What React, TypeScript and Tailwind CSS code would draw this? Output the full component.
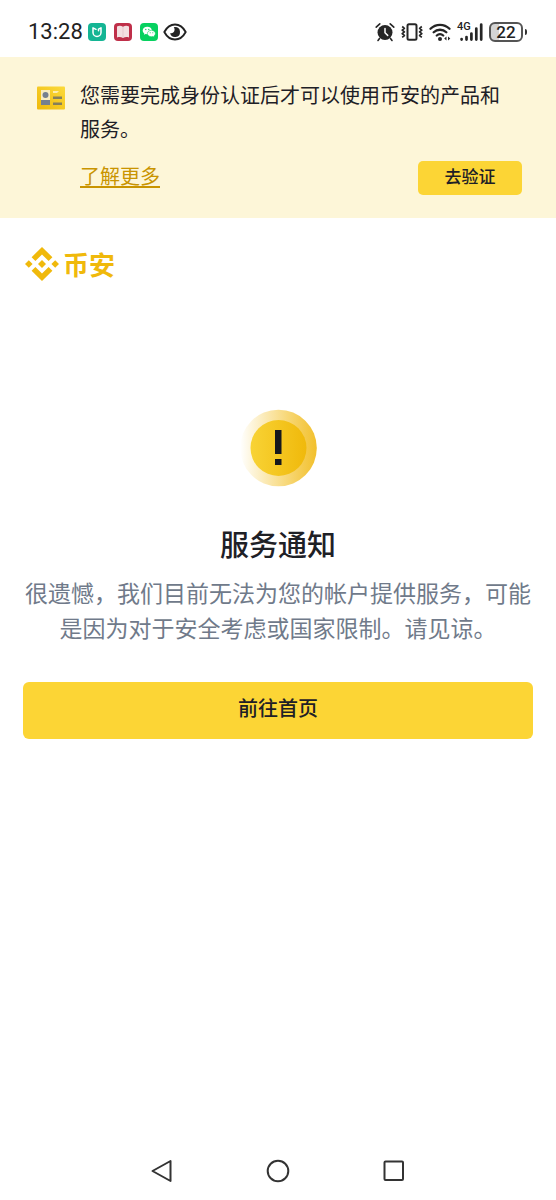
const MiHomeIcon = () => (
    <svg className="size-[18px]" viewBox="0 0 18 18" fill="none" aria-hidden="true">
        <rect width="18" height="18" rx="4" fill="#14b594" />
        <path d="M8 6.300L5 4.800v4.700a4 4 0 0 0 8 0V4.800L10.500 6.200v1.500" stroke="#fff" strokeWidth="1.500" strokeLinecap="round" strokeLinejoin="round" />
    </svg>
);

const ReaderIcon = () => (
    <svg className="size-[18px]" viewBox="0 0 18 18" aria-hidden="true">
        <rect width="18" height="18" rx="4" fill="#bf2f49" />
        <path d="M3 3.500c2-1 4-1 6 .3 2-1.300 4-1.300 6-.3v11c-2-.7-4-.7-6 .5-2-1.200-4-1.200-6-.5z" fill="#f3dfe1" />
        <path d="M9 4v10.500" stroke="#e3bfc5" strokeWidth=".7" />
    </svg>
);

const WeChatIcon = () => (
    <svg className="size-[18px]" viewBox="0 0 18 18" aria-hidden="true">
        <rect width="18" height="18" rx="4" fill="#07d160" />
        <path d="M7.300 3.800C4.700 3.800 2.700 5.400 2.700 7.500c0 1.200.6 2.200 1.600 2.900l-.4 1.400 1.700-.8 1.700.2c2.600 0 4.600-1.600 4.600-3.700S9.900 3.800 7.300 3.800z" fill="#fff" />
        <path d="M11.400 7.300c-2.200 0-4 1.400-4 3.200s1.800 3.200 4 3.200l1.400-.2 1.500.8-.4-1.300c.9-.6 1.500-1.500 1.500-2.500 0-1.800-1.800-3.200-4-3.200z" fill="#fff" stroke="#07d160" strokeWidth=".6" />
        <g fill="#07d160">
            <circle cx="5.800" cy="6.500" r=".65" />
            <circle cx="8.800" cy="6.500" r=".65" />
            <circle cx="10.200" cy="9.700" r=".55" />
            <circle cx="12.800" cy="9.700" r=".55" />
        </g>
    </svg>
);

const EyeIcon = () => (
    <svg className="-ml-[3px] h-[18px] w-6" viewBox="0 0 24 18" fill="none" aria-hidden="true">
        <path d="M1.300 9C4 4 7.500 1.500 12 1.500S20 4 22.700 9C20 14 16.500 16.500 12 16.500S4 14 1.300 9z" stroke="#222" strokeWidth="1.900" strokeLinejoin="round" />
        <path d="M12 4a5 5 0 1 1-4.900 6c1.100.4 2.500.1 3.400-.8 1.300-1.300 1.500-3.400.3-5z" fill="#222" />
    </svg>
);

const AlarmIcon = () => (
    <svg className="size-5" viewBox="0 0 20 20" fill="none" aria-hidden="true">
        <circle cx="10" cy="10.500" r="7.500" fill="#262626" />
        <path d="M10 6.500v4.300l2.700 2.600" stroke="#fff" strokeWidth="1.500" strokeLinecap="round" />
        <path d="M1.200 5.200l3.600-3.400M18.800 5.200l-3.600-3.400M4.500 16.500l-1.500 2M15.500 16.500l1.500 2" stroke="#262626" strokeWidth="1.600" strokeLinecap="round" />
    </svg>
);

const VibrateIcon = () => (
    <svg className="h-5 w-[22px]" viewBox="0 0 22 20" fill="none" stroke="#262626" aria-hidden="true">
        <rect x="6.500" y="2.300" width="9" height="15.400" rx="1.500" strokeWidth="2" />
        <path d="M1.200 4.500l2.200 1.800-2.200 1.800 2.200 1.800-2.200 1.800 2.200 1.800-2.200 1.800M20.800 4.500l-2.200 1.800 2.200 1.800-2.200 1.800 2.200 1.800-2.200 1.800 2.200 1.800" strokeWidth="1.700" strokeLinejoin="round" />
    </svg>
);

const WifiIcon = () => (
    <svg className="h-5 w-[22px]" viewBox="0 0 22 20" fill="none" stroke="#262626" strokeLinecap="round" aria-hidden="true">
        <path d="M1.500 6.700a13.500 13.500 0 0 1 19 0M4.700 10.300a9 9 0 0 1 12.600 0M7.800 13.500a4.700 4.700 0 0 1 6.400 0" strokeWidth="2.300" />
        <circle cx="11" cy="17" r="2" fill="#262626" stroke="none" />
        <path d="M17.500 14.600v4l-2.300-2zM19 14.600v4l2.300-2z" fill="#262626" stroke="none" />
    </svg>
);

const SignalIcon = () => (
    <span className="relative block h-5 w-[26px]">
        <span className="absolute -top-px left-0 font-[Roboto] text-[11px] leading-[12px] font-medium">4G</span>
        <svg className="h-5 w-[26px]" viewBox="0 0 26 20" fill="none" stroke="#262626" strokeWidth="2.700" strokeLinecap="round" aria-hidden="true">
            <path d="M4.600 17v.6M9.500 15v2.600M14.400 11.500v6.100M19.300 6.500v11.100M24.200 2.500v15.100" />
        </svg>
    </span>
);

const BatteryIcon = () => (
    <div className="flex items-center gap-0.5">
        <div className="flex h-5 w-[34px] items-center justify-center rounded-md border-2 border-[#555] bg-linear-to-r from-[#d4d4d4] from-25% to-white to-25% font-[Roboto] text-[17px] leading-none font-medium">
            22
        </div>
        <div className="h-1.5 w-0.5 rounded-r-sm bg-[#333]" />
    </div>
);

const StatusBar = () => (
    <header className="flex h-[57px] items-center justify-between pt-[7px] pr-[29px] pl-7 text-[#222]">
        <div className="flex items-center gap-2">
            <span className="-mr-[3px] font-[Roboto] text-[22px] leading-6">13:28</span>
            <MiHomeIcon />
            <ReaderIcon />
            <WeChatIcon />
            <EyeIcon />
        </div>
        <div className="flex items-center gap-1.5">
            <AlarmIcon />
            <VibrateIcon />
            <WifiIcon />
            <SignalIcon />
            <BatteryIcon />
        </div>
    </header>
);

const IdCardIcon = () => (
    <svg className="mt-2 h-6 w-7 shrink-0" viewBox="0 0 28 24" aria-hidden="true">
        <defs>
            <linearGradient id="card" x1="0" y1="1" x2="1" y2="0">
                <stop stopColor="#efb90b" />
                <stop offset="1" stopColor="#fbda3c" />
            </linearGradient>
        </defs>
        <rect y="0.500" width="28" height="23" rx="1" fill="url(#card)" />
        <rect x="4" y="4" width="9" height="10" fill="#f8ecc0" />
        <circle cx="8.500" cy="9" r="3" fill="#76808f" />
        <path d="M4 14h9v5H4z" fill="#76808f" />
        <path d="M16 5h6l-2 2h-4z" fill="#fbedb0" />
        <path d="M16 10.500h9V13h-9zM16 16.500h9V19h-9z" fill="#857f5c" />
    </svg>
);

const VerifyBanner = () => (
    <section className="flex gap-[15px] bg-[#fdf6d8] pt-[21px] pr-[34px] pb-[23px] pl-[37px]">
        <IdCardIcon />
        <div className="flex-1">
            <p className="pr-4 text-xl leading-[34px] text-[#1e2026]">您需要完成身份认证后才可以使用币安的产品和服务。</p>
            <div className="mt-[15px] flex items-start justify-between">
                <a href="#" className="text-xl leading-[30px] text-[#c99400] underline decoration-2 underline-offset-2">了解更多</a>
                <button type="button" className="h-[34px] w-[104px] rounded-[5px] bg-[#fcd535] pb-1 text-[17px] font-medium text-[#1e2026]">去验证</button>
            </div>
        </div>
    </section>
);

const BrandLogo = () => (
    <div className="flex items-center gap-1 text-[#f0b90b]">
        <svg className="size-[34px]" viewBox="0 0 34 34" fill="currentColor" aria-hidden="true">
            <path d="M10.400 14L17 7.400l6.600 6.600 3.800-3.800L17 0 6.600 10.200zM0 17l3.800-3.800L7.600 17l-3.800 3.800zM10.400 20L17 26.600l6.600-6.600 3.800 3.800L17 34 6.600 23.800zM26.400 17l3.800-3.800L34 17l-3.800 3.800zM13 17l4-4 4 4-4 4z" />
        </svg>
        <span className="text-[26px] leading-[34px] font-bold">币安</span>
    </div>
);

const WarningBadge = () => (
    <svg className="size-[78px]" viewBox="0 0 78 78" aria-hidden="true">
        <defs>
            <linearGradient id="ring" x1="0" x2="1">
                <stop stopColor="#f3bd16" stopOpacity="0" />
                <stop offset="1" stopColor="#f2c02c" />
            </linearGradient>
            <linearGradient id="disc" x1="0" y1="0.500" x2="1" y2="0.500">
                <stop stopColor="#f8d335" />
                <stop offset="1" stopColor="#f0b90b" />
            </linearGradient>
        </defs>
        <circle cx="39.500" cy="39" r="38.300" fill="url(#ring)" />
        <circle cx="39.500" cy="39" r="28" fill="url(#disc)" />
        <path d="M36 21h6.500v24H36zM36 50h6.500v6H36z" fill="#15171c" />
    </svg>
);

const NavBar = () => (
    <nav className="flex h-[58px] items-center justify-center gap-[92px] text-[#333]">
        <button type="button" aria-label="返回">
            <svg className="size-6" viewBox="0 0 24 24" fill="none" stroke="currentColor" strokeWidth="2" strokeLinejoin="round">
                <path d="M2.500 12L20.500 2v20z" />
            </svg>
        </button>
        <button type="button" aria-label="主页">
            <svg className="size-6" viewBox="0 0 24 24" fill="none" stroke="currentColor" strokeWidth="2">
                <circle cx="12" cy="12" r="10.300" />
            </svg>
        </button>
        <button type="button" aria-label="最近任务">
            <svg className="size-6" viewBox="0 0 24 24" fill="none" stroke="currentColor" strokeWidth="2">
                <rect x="2.500" y="2.500" width="18.500" height="18.500" rx="1" />
            </svg>
        </button>
    </nav>
);

export default function App() {
    return (
        <div className="flex min-h-screen flex-col bg-white font-['Noto_Sans_CJK_SC',sans-serif]">
            <StatusBar />
            <VerifyBanner />
            <main className="flex flex-1 flex-col px-[23px] pt-[29px]">
                <div className="pl-0.5">
                    <BrandLogo />
                </div>
                <div className="mt-32 flex flex-col items-center text-center">
                    <WarningBadge />
                    <h1 className="mt-[34px] text-[29px] leading-[44px] font-medium text-[#1e2026]">服务通知</h1>
                    <p className="mt-2.5 text-[23px] leading-[35px] text-[#707a8a]">很遗憾，我们目前无法为您的帐户提供服务，可能是因为对于安全考虑或国家限制。请见谅。</p>
                    <button type="button" className="mt-[37px] h-[57px] w-full rounded-md bg-[#fcd535] pb-1.5 text-xl font-medium text-[#1e2026]">前往首页</button>
                </div>
            </main>
            <NavBar />
        </div>
    );
}
